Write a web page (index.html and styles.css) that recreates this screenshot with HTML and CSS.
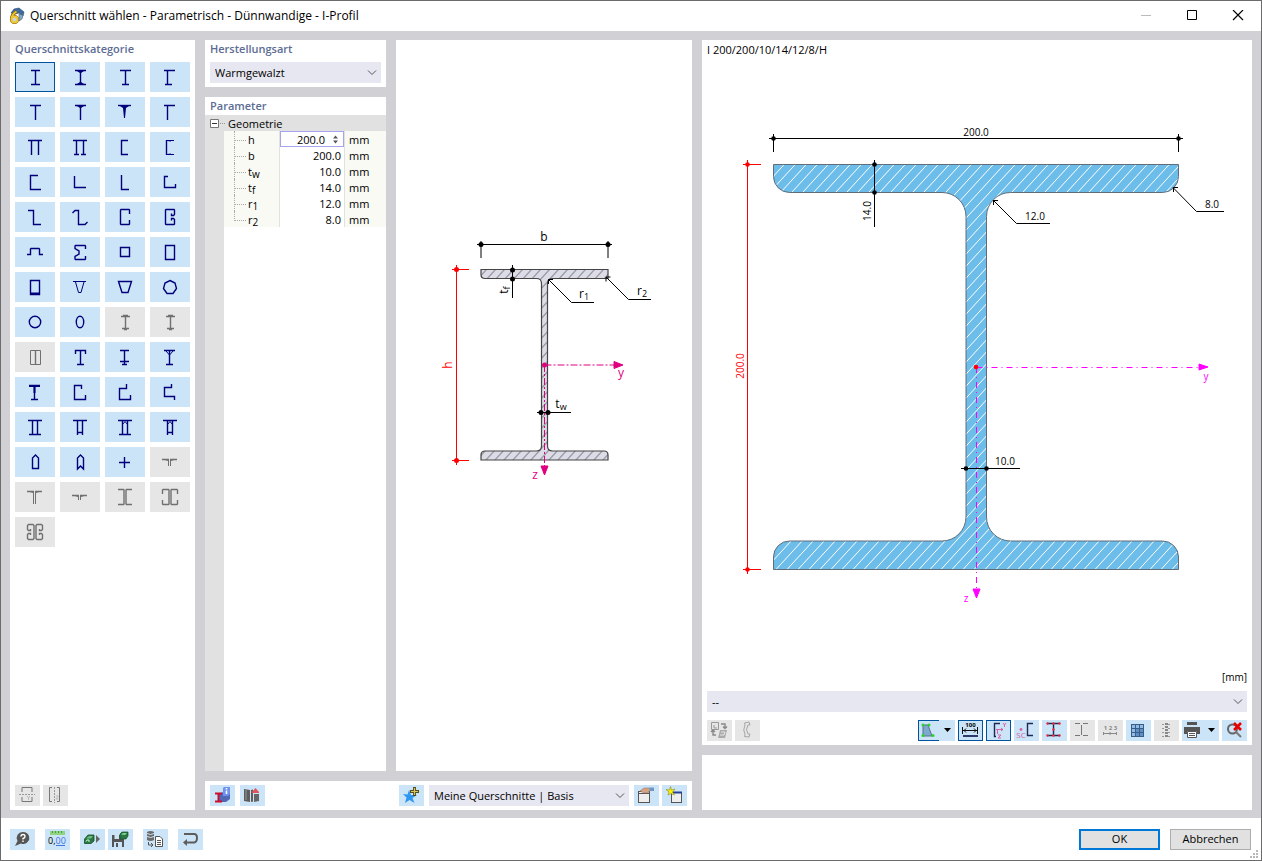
FILE: index.html
```html
<!DOCTYPE html>
<html lang="de">
<head>
    <meta charset="UTF-8">
    <meta name="viewport" content="width=device-width, initial-scale=1.0">
    <title>Querschnitt wählen</title>
    <link rel="stylesheet" href="styles.css">
</head>
<body>
    <header class="titlebar">
        <svg class="app-icon" width="18" height="18" viewBox="0 0 18 18">
            <path d="M3 6L6 2L11 1L16 5L15 9L11 6L7 7Z" fill="#3d6b9c" stroke="#26476e" stroke-width=".6"/>
            <path d="M11 7L15 8L14 12L11 14Z" fill="#86a9cb" stroke="#3c5877" stroke-width=".6"/>
            <path d="M8.500 4.500Q4 7 3.500 12" fill="none" stroke="#7c6110" stroke-width="3.200"/>
            <circle cx="6.500" cy="12.500" r="3" fill="#fff" stroke="#7c6110" stroke-width="3.200"/>
            <path d="M8.500 4.500Q4 7 3.500 12" fill="none" stroke="#f3c62c" stroke-width="2"/>
            <circle cx="6.500" cy="12.500" r="3" fill="#c7d4e2" stroke="#f3c62c" stroke-width="2"/>
        </svg>
        <h1>Querschnitt wählen - Parametrisch - Dünnwandige - I-Profil</h1>
        <div class="window-controls">
            <button aria-label="Minimieren" disabled><svg width="12" height="12" viewBox="0 0 12 12"><path d="M1 5.500H11" stroke="#bbb"/></svg></button>
            <button aria-label="Maximieren"><svg width="12" height="12" viewBox="0 0 12 12"><path d="M1.500 .5H10.500V9.500H1.500Z" fill="none" stroke="#000"/></svg></button>
            <button aria-label="Schließen"><svg width="12" height="12" viewBox="0 0 12 12"><path d="M1 0L11 10M11 0L1 10" stroke="#000" stroke-width="1.200"/></svg></button>
        </div>
    </header>

    <main class="workspace">
        <section class="panel categories">
            <h2>Querschnittskategorie</h2>
            <div class="category-grid">
                <button class="active" aria-label="I-Profil"><svg viewBox="0 0 40 30"><path d="M16 8.500H25M20.500 8.500V22.500M16 22.500H25"/></svg></button>
                <button aria-label="I-Profil geneigt"><svg viewBox="0 0 40 30"><path d="M15 8.500H26M20.500 8.500V22.500M15 22.500H26"/><path class="solid" d="M17 9H24L21 11H20ZM17 22H24L21 20H20Z"/></svg></button>
                <button aria-label="I-Profil einfachsymmetrisch"><svg viewBox="0 0 40 30"><path d="M15 8.500H26M20.500 8.500V22.500M17 22.500H24"/></svg></button>
                <button aria-label="I-Profil unsymmetrisch"><svg viewBox="0 0 40 30"><path d="M14 8.500H25M17.500 8.500V22.500M15 22.500H22"/></svg></button>

                <button aria-label="T-Profil"><svg viewBox="0 0 40 30"><path d="M15 8.500H26M20.500 8.500V23"/></svg></button>
                <button aria-label="T-Profil geneigter Flansch"><svg viewBox="0 0 40 30"><path d="M15 8.500H26M20.500 8.500V23"/><path class="solid" d="M17 9H24L21 11H20Z"/></svg></button>
                <button aria-label="T-Profil geneigter Steg"><svg viewBox="0 0 40 30"><path d="M13 8.500H26"/><path class="solid" d="M15 9H24L21 11L20 21H19L18 11Z"/></svg></button>
                <button aria-label="T-Profil unsymmetrisch"><svg viewBox="0 0 40 30"><path d="M14 8.500H25M17.500 8.500V23"/></svg></button>

                <button aria-label="Doppel-T offen"><svg viewBox="0 0 40 30"><path d="M13 8.500H27M16.500 8.500V23M23.500 8.500V23"/></svg></button>
                <button aria-label="Doppelsteg"><svg viewBox="0 0 40 30"><path d="M13 8.500H27M16.500 8.500V22.500M23.500 8.500V22.500M14 22.500H19M21 22.500H26"/></svg></button>
                <button aria-label="U-Profil"><svg viewBox="0 0 40 30"><path d="M23 8.500H16.500V22.500H23"/></svg></button>
                <button aria-label="U-Profil geneigt"><svg viewBox="0 0 40 30"><path d="M16.500 8V23"/><path class="thin" d="M24 8.500H17L21 9M24 22.500H17L21 22"/></svg></button>

                <button aria-label="U-Profil unsymmetrisch"><svg viewBox="0 0 40 30"><path d="M23 8.500H15.500V22.500H26"/></svg></button>
                <button aria-label="Winkel gleichschenklig"><svg viewBox="0 0 40 30"><path d="M14.500 9V20.500H26"/></svg></button>
                <button aria-label="Winkel ungleichschenklig"><svg viewBox="0 0 40 30"><path d="M16.500 8V22.500H24"/></svg></button>
                <button aria-label="Winkel mit Lippen"><svg viewBox="0 0 40 30"><path d="M18 9.500H14.500V20.500H25.500V17"/></svg></button>

                <button aria-label="Z-Profil"><svg viewBox="0 0 40 30"><path d="M13 8.500H18.500V22.500H26"/></svg></button>
                <button aria-label="Z-Profil mit Lippen"><svg viewBox="0 0 40 30"><path d="M12.500 11L15 8.500H18.500V22.500H25L27.500 20"/></svg></button>
                <button aria-label="C-Profil"><svg viewBox="0 0 40 30"><path d="M24.500 12V8L24 7.500H16L15.500 8V22L16 22.500H24L24.500 22V18"/></svg></button>
                <button aria-label="C-Profil mit Doppellippe"><svg viewBox="0 0 40 30"><path d="M21.500 11.500V13.500H23.500L24.500 12.500V8L24 7.500H16L15.500 8V22L16 22.500H24L24.500 22V17.500L23.500 16.500H21.500V18.500"/></svg></button>

                <button aria-label="Hutprofil"><svg viewBox="0 0 40 30"><path d="M12 17.500H15.500V12L16 11.500H24L24.500 12V17.500H28"/></svg></button>
                <button aria-label="Sigma-Profil"><svg viewBox="0 0 40 30"><path d="M25.500 12V9L25 8.500H15.500L15 9V11.500L19 14V17L15 19.500V22L15.500 22.500H25L25.500 22V19"/></svg></button>
                <button aria-label="Quadratrohr"><svg viewBox="0 0 40 30"><path d="M15.500 10.500H24.500V19.500H15.500Z"/></svg></button>
                <button aria-label="Rechteckrohr"><svg viewBox="0 0 40 30"><path d="M15.500 8.500H24.500V22.500H15.500Z"/></svg></button>

                <button aria-label="Rechteckrohr ungleich"><svg viewBox="0 0 40 30"><path d="M15.500 8.500H24.500V22.500H15.500Z"/><path class="solid" d="M15 20.500H24V9H25V23H15Z"/></svg></button>
                <button aria-label="Trapez mit Flansch"><svg viewBox="0 0 40 30"><path class="thin" d="M13 9.500H26M15.500 10L18.500 20.500H21L24 10"/></svg></button>
                <button aria-label="Trapezrohr"><svg viewBox="0 0 40 30"><path d="M13.500 9.500H26.500L23 20.500H17Z"/></svg></button>
                <button aria-label="Polygonrohr"><svg viewBox="0 0 40 30"><path d="M20 8.500L25 11L26.500 16.500L23 21.500H17L13.500 16.500L15 11Z"/></svg></button>

                <button aria-label="Rundrohr"><svg viewBox="0 0 40 30"><circle cx="20" cy="15" r="5.700"/></svg></button>
                <button aria-label="Ellipsenrohr"><svg viewBox="0 0 40 30"><ellipse cx="20" cy="15" rx="3.700" ry="5.700"/></svg></button>
                <button disabled aria-label="I-Profil verstärkt"><svg viewBox="0 0 40 30"><path d="M16 9.500H25M18 8.500H23M20.500 9V22M17 21.500H24M19 22.500H22"/></svg></button>
                <button disabled aria-label="I-Profil doppelt verstärkt"><svg viewBox="0 0 40 30"><path d="M16 9.500H25M18 8.500H23M20.500 9V22M17 21.500H24M19 22.500H22"/></svg></button>

                <button disabled aria-label="I-Profil mit Blechen"><svg viewBox="0 0 40 30"><path class="thin" d="M15.500 8.500H25.500V22.500H15.500Z"/><path d="M20.500 8V23"/></svg></button>
                <button aria-label="I-Profil mit Flanschlippen"><svg viewBox="0 0 40 30"><path d="M15.500 12V8.500H25.500V12M20.500 8.500V22.500M17 22.500H24"/></svg></button>
                <button aria-label="I-Profil mit Zusatzflansch"><svg viewBox="0 0 40 30"><path d="M15 8.500H24M19.500 8.500V22.500M15 19.500H24M17 22.500H22"/></svg></button>
                <button aria-label="I-Profil mit Dreieck"><svg viewBox="0 0 40 30"><path d="M14 8.500H25M19.500 8.500V22.500M16 22.500H23"/><path class="thin" d="M16 9L19.500 13L23 9"/></svg></button>

                <button aria-label="Schienenprofil"><svg viewBox="0 0 40 30"><path d="M14 8.500H25M19.500 8.500V22.500M16 22.500H23"/><path class="solid" d="M14 8H25V10H20.500V16H18.500V10H14Z"/></svg></button>
                <button aria-label="C unsymmetrisch"><svg viewBox="0 0 40 30"><path d="M21.500 12V8.500H14.500V22.500H25.500V18"/></svg></button>
                <button aria-label="C Lippe außen"><svg viewBox="0 0 40 30"><path d="M21.500 7V11.500H14.500V22.500H25.500V18"/></svg></button>
                <button aria-label="C Lippen gegensinnig"><svg viewBox="0 0 40 30"><path d="M21.500 7V10.500H14.500V19.500H24.500V23"/></svg></button>

                <button aria-label="Kasten mit Flanschen"><svg viewBox="0 0 40 30"><path d="M13 8.500H27M17.500 8.500V22.500M22.500 8.500V22.500M14 22.500H26"/></svg></button>
                <button aria-label="Kasten mit Boden"><svg viewBox="0 0 40 30"><path d="M13 8.500H27M17.500 8.500V23M22.500 8.500V23M17.500 20.500H22.500"/></svg></button>
                <button aria-label="Kasten mit Flanschen und Steife"><svg viewBox="0 0 40 30"><path d="M13 8.500H27M17.500 8.500V22.500M22.500 8.500V22.500M14 22.500H26"/><path class="thin" d="M17.500 12.500L20 9.500L22.500 12.500"/></svg></button>
                <button aria-label="Kasten mit Boden und Steife"><svg viewBox="0 0 40 30"><path d="M13 8.500H27M17.500 8.500V23M22.500 8.500V23M17.500 20.500H22.500"/><path class="thin" d="M17.500 12.500L20 9.500L22.500 12.500"/></svg></button>

                <button aria-label="Kasten mit Spitze"><svg viewBox="0 0 40 30"><path d="M17.500 21.500V11L20.500 8L23.500 11V21.500Z"/></svg></button>
                <button aria-label="Kasten mit Spitze und Kerbe"><svg viewBox="0 0 40 30"><path d="M17.500 22V11L20.500 8L23.500 11V22L20.500 19Z"/></svg></button>
                <button aria-label="Kreuz"><svg viewBox="0 0 40 30"><path d="M14 15.500H25M19.500 10V21"/></svg></button>
                <button disabled aria-label="Doppelwinkel"><svg viewBox="0 0 40 30"><path d="M12 12.500H19M20 12.500H27"/><path class="solid" d="M15 13H19V19H18V14ZM24 13H20V19H21V14Z"/></svg></button>

                <button disabled aria-label="Doppelwinkel lang"><svg viewBox="0 0 40 30"><path d="M12 9.500H19M20 9.500H27"/><path class="solid" d="M15 10H19V22H18V11ZM24 10H20V22H21V11Z"/></svg></button>
                <button disabled aria-label="Doppelwinkel flach"><svg viewBox="0 0 40 30"><path d="M12 13.500H19M20 13.500H27"/><path class="solid" d="M15 14H19V18H18V15ZM24 14H20V18H21V15Z"/></svg></button>
                <button disabled aria-label="Doppel-U"><svg viewBox="0 0 40 30"><path d="M13 7.500H18.500L19 8V22L18.500 22.500H13M27 7.500H21.500L21 8V22L21.500 22.500H27"/></svg></button>
                <button disabled aria-label="Doppel-C"><svg viewBox="0 0 40 30"><path d="M12.500 12V8L13 7.500H18.500L19 8V22L18.500 22.500H13L12.500 22V18M27.500 12V8L27 7.500H21.500L21 8V22L21.500 22.500H27L27.500 22V18"/></svg></button>

                <button disabled aria-label="Doppel-C mit Doppellippe"><svg viewBox="0 0 40 30"><path d="M15.500 12V13.500H13.500L12.500 12.500V8.500L13.500 7.500H18L19 8.500V21.500L18 22.500H13.500L12.500 21.500V17.500L13.500 16.500H15.500V18M24.500 12V13.500H26.500L27.500 12.500V8.500L26.500 7.500H22L21 8.500V21.500L22 22.500H26.500L27.500 21.500V17.500L26.500 16.500H24.500V18"/></svg></button>
            </div>
            <div class="toolbar panel-end">
                <button class="tool" disabled aria-label="An y-Achse spiegeln"><svg viewBox="0 0 25 21"><path d="M7 7V2.500H17V7M7 12V16.500H17V12" fill="none" stroke="#777"/><path d="M4 9.500H20" stroke="#999" stroke-dasharray="2 1"/><path d="M12 11L13.500 13L15 11M13.500 13V15" fill="none" stroke="#bbb"/></svg></button>
                <button class="tool" disabled aria-label="An z-Achse spiegeln"><svg viewBox="0 0 25 21"><path d="M9 2.500H6.500V16.500H9M14 2.500H16.500V16.500H14" fill="none" stroke="#777"/><path d="M11.500 2V18" stroke="#999" stroke-dasharray="2 1"/><path d="M13 11H15.500L13 14H15.500" fill="none" stroke="#bbb"/></svg></button>
            </div>
        </section>

        <div class="center">
            <div class="side">
                <section class="panel production">
                    <h2><label for="production">Herstellungsart</label></h2>
                    <select id="production"><option>Warmgewalzt</option></select>
                </section>
                <section class="panel parameters">
                    <h2>Parameter</h2>
                    <div class="tree-head">
                        <button class="toggle" aria-label="Geometrie zuklappen"><svg width="9" height="9" viewBox="0 0 9 9"><path d="M.5.5H8.500V8.500H.5Z" fill="#fff" stroke="#777"/><path d="M2 4.500H7" stroke="#333"/></svg></button>
                        <span>Geometrie</span>
                    </div>
                    <div class="tree-body">
                        <table>
                            <tr><th><label for="h">h</label></th><td class="edit"><input id="h" type="text" value="200.0"><svg width="5" height="9" viewBox="0 0 5 9"><path d="M0 3.500L2.500 0.500L5 3.500ZM0 5.500L2.500 8.500L5 5.500Z" fill="#555"/></svg></td><td class="unit">mm</td></tr>
                            <tr><th>b</th><td>200.0</td><td class="unit">mm</td></tr>
                            <tr><th>t<sub>w</sub></th><td>10.0</td><td class="unit">mm</td></tr>
                            <tr><th>t<sub>f</sub></th><td>14.0</td><td class="unit">mm</td></tr>
                            <tr><th>r<sub>1</sub></th><td>12.0</td><td class="unit">mm</td></tr>
                            <tr><th>r<sub>2</sub></th><td>8.0</td><td class="unit">mm</td></tr>
                        </table>
                    </div>
                </section>
            </div>

            <section class="panel sketch">
                <svg viewBox="396 40 296 731">
                    <defs>
                        <pattern id="hatch-grey" width="9" height="10" patternUnits="userSpaceOnUse">
                            <rect width="9" height="10" fill="#dcdce6"/>
                            <path d="M0 10L9 0M-1 1.100L1 -1.100M8 11.100L10 8.900" stroke="#9a9aa8" stroke-width="1.300"/>
                        </pattern>
                    </defs>
                    <path d="M481 269.500H608V278.500H552.500Q547.500 278.500 547.500 283.500V446Q547.500 451 552.500 451H604Q608 451 608 455V460H481V455Q481 451 485 451H536.500Q541.500 451 541.500 446V283.500Q541.500 278.500 536.500 278.500H485Q481 278.500 481 274.500Z" fill="url(#hatch-grey)" stroke="#444" stroke-width="1.200"/>
                    <g class="dim">
                        <path d="M477 244.500H612M481 241V258M608 241V258M512.500 265V298M537 412.500H571M548.500 279.500L571.500 302.500H594M606 277L628.500 299.500H651M548.500 284V279.500H553M606 281.500V277H610.500"/>
                        <circle cx="481" cy="244.500" r="2.500"/><circle cx="608" cy="244.500" r="2.500"/>
                        <circle cx="512.500" cy="270" r="2.500"/><circle cx="512.500" cy="279" r="2.500"/>
                        <circle cx="541" cy="412.500" r="2.500"/><circle cx="548" cy="412.500" r="2.500"/>
                        <text x="544" y="241">b</text>
                        <text x="584" y="298">r<tspan class="sub" dy="2">1</tspan></text>
                        <text x="642" y="295">r<tspan class="sub" dy="2">2</tspan></text>
                        <text x="561" y="408">t<tspan class="sub" dy="2">w</tspan></text>
                        <text transform="translate(508 290) rotate(-90)">t<tspan class="sub" dy="2">f</tspan></text>
                    </g>
                    <g class="dim red">
                        <path d="M456.500 265V465M452 269.500H469M452 460.500H469"/>
                        <circle cx="456.500" cy="269.500" r="2.500"/><circle cx="456.500" cy="460.500" r="2.500"/>
                        <text transform="translate(452 365) rotate(-90)">h</text>
                    </g>
                    <g class="dim pink">
                        <path d="M544.500 365H615M544.500 365V467" stroke-dasharray="7 2 2 2"/>
                        <path class="tip" d="M614 361.500L623 365L614 368.500ZM541 466L544.500 475L548 466Z"/>
                        <circle cx="544.500" cy="365" r="2.500"/>
                        <text x="621" y="377">y</text>
                        <text x="535" y="479">z</text>
                    </g>
                </svg>
            </section>

            <div class="panel favourites">
                <button class="tool" aria-label="Querschnittsinfo"><svg viewBox="0 0 25 21"><path d="M9 9L13 7H20V14L16 17H9Z" fill="#5169b5"/><path d="M13 3L14 2H20V9L18 11H13Z" fill="#6f92ee"/><path d="M16.500 3V4.500M16.500 5.500V9" stroke="#fff" stroke-width="1.600"/><path d="M5 8.500H12M8.500 8.500V16M5 16.500H12" stroke="#c8102e" stroke-width="2"/></svg></button>
                <button class="tool" aria-label="Bibliothek"><svg viewBox="0 0 25 21"><path d="M4 4L10 5V17L4 16ZM11 5L13 4.500V16.500L11 17Z" fill="#5d5d5d"/><path d="M6 5V15" stroke="#999"/><path d="M14 9H19V16L14 17Z" fill="#666"/><path d="M12 7L15.500 3L19 7V8H12Z" fill="#e0555c"/></svg></button>
                <button class="tool star" aria-label="Zu Favoriten hinzufügen"><svg viewBox="0 0 25 21"><path d="M10 5L12 10L18 10L13.500 13L15.500 18L10.500 15L6 18L7.500 12.500L4 9L8.500 9.500Z" fill="#3097f0"/><path d="M15.500 2V11M11 6.500H20" stroke="#544c1d" stroke-width="3"/><path d="M15.500 3V10M12 6.500H19" stroke="#d9c65a" stroke-width="1.200"/></svg></button>
                <select aria-label="Favoritengruppe"><option>Meine Querschnitte | Basis</option></select>
                <div class="toolbar">
                    <button class="tool" aria-label="Gruppe bearbeiten"><svg viewBox="0 0 25 21"><rect x="4.500" y="6.500" width="11" height="11" fill="#eee" stroke="#555"/><path d="M5 8.500H15" stroke="#555"/><path d="M6 6L10 3H15L16 5L14 8H10L8 7Z" fill="#d4a284" stroke="#8f6e5b" stroke-width=".5"/><path d="M15 2.500H20V6L16 6Z" fill="#7196c2"/></svg></button>
                    <button class="tool" aria-label="Neue Gruppe"><svg viewBox="0 0 25 21"><rect x="9.500" y="7.500" width="10" height="10" fill="#eee" stroke="#555"/><path d="M9 7.500H20" stroke="#243f94" stroke-width="2"/><path d="M8.500 1.500L9.500 5L13 4L10.500 7L12.500 10L9 8.500L6 10L7 7L4 4.500L7.500 5Z" fill="#fff200" stroke="#8b8c24" stroke-width=".6"/></svg></button>
                </div>
            </div>
        </div>

        <div class="right">
            <section class="panel preview">
                <p class="section-name">I 200/200/10/14/12/8/H</p>
                <svg class="section-drawing" viewBox="707 62 540 604">
                    <defs>
                        <pattern id="hatch-blue" width="11" height="12" patternUnits="userSpaceOnUse">
                            <rect width="11" height="12" fill="#6dbdeb"/>
                            <path d="M0 12L11 0M-1 1.090L1 -1.090M10 13.090L12 10.910" stroke="#fff"/>
                        </pattern>
                    </defs>
                    <path d="M773.500 164.500H1178.500V176.500A16 16 0 0 1 1162.500 192.500H1010.500A24 24 0 0 0 986.500 216.500V517A24 24 0 0 0 1010.500 541H1162.500A16 16 0 0 1 1178.500 557V569.500H773.500V557A16 16 0 0 1 789.500 541H942A24 24 0 0 0 966 517V216.500A24 24 0 0 0 942 192.500H789.500A16 16 0 0 1 773.500 176.500Z" fill="url(#hatch-blue)" stroke="#606d78"/>
                    <g class="dim small">
                        <path d="M769 138.500H1183M773.500 134V152M1178.500 134V152M874.500 160V227M961 468.500H1020M993 200L1016.500 223.500H1050M1173 187.500L1196.500 211.500H1224M993.500 205V200.500H998M1173.500 192V187.500H1178"/>
                        <circle cx="773.500" cy="138.500" r="2.300"/><circle cx="1178.500" cy="138.500" r="2.300"/>
                        <circle cx="874.500" cy="164.500" r="2.300"/><circle cx="874.500" cy="192.500" r="2.300"/>
                        <circle cx="966" cy="468.500" r="2.300"/><circle cx="986.500" cy="468.500" r="2.300"/>
                        <text x="976" y="136">200.0</text>
                        <text x="1035" y="220">12.0</text>
                        <text x="1212" y="208">8.0</text>
                        <text x="1005" y="465">10.0</text>
                        <text transform="translate(871 211) rotate(-90)">14.0</text>
                    </g>
                    <g class="dim small red">
                        <path d="M747.500 160V574M743 164.500H761M743 569.500H761"/>
                        <circle cx="747.500" cy="164.500" r="2.300"/><circle cx="747.500" cy="569.500" r="2.300"/>
                        <text transform="translate(744 366) rotate(-90)">200.0</text>
                    </g>
                    <g class="dim small magenta">
                        <path d="M976.500 367.500H1200M976.500 367V590" stroke-dasharray="6 4 1 4"/>
                        <path class="tip" d="M1199 364L1208 367L1199 370ZM973 589L976.500 598L980 589Z"/>
                        <text x="1206" y="380">y</text>
                        <text x="966" y="602">z</text>
                    </g>
                    <circle cx="976" cy="367" r="2.300" fill="#f00"/>
                </svg>
                <p class="unit-note">[mm]</p>
                <select aria-label="Darstellung"><option>--</option></select>
                <div class="toolbar view-tools">
                    <button class="tool" disabled aria-label="Drehen"><svg viewBox="0 0 25 21"><path d="M4.500 2.500H11.500V9.500H4.500ZM7 5V8H10" fill="none" stroke="#999"/><path d="M14 4H18V8M16 6.500L18 8.500L20 6.500M4 12L6 10L8 12M6 11V15H9" fill="none" stroke="#888" stroke-width="1.400"/><path d="M13 10H20L18 18H11Z" fill="#aaa"/><path d="M14 12H18L17 15H13" fill="none" stroke="#e6e6e6"/></svg></button>
                    <button class="tool" disabled aria-label="Verformung"><svg viewBox="0 0 25 21"><path d="M9.500 3L14 2L15 5H13Q10 10 13 14H15L14 17L9.500 16.500M9.500 3L10 5Q7.500 10 10 14.500L9.500 16.500" fill="none" stroke="#a5a5a5"/></svg></button>
                    <button class="tool split half-on first-right" aria-label="Ansicht"><svg viewBox="0 0 37 21"><path d="M5 5L10 5L14 16H5Z" fill="#7ea9ce" stroke="#55708e"/><circle cx="5" cy="5" r="1.500" fill="#2ed22e"/><circle cx="11" cy="5" r="1.500" fill="#2ed22e"/><circle cx="15" cy="15.500" r="1.500" fill="#2ed22e"/><circle cx="5" cy="15.500" r="1.500" fill="#2ed22e"/><path d="M26 8H33L29.500 12Z"/></svg></button>
                    <button class="tool on" aria-label="Bemaßung"><svg viewBox="0 0 25 21"><text x="12.500" y="7" class="icon-text">100</text><path d="M4.500 7V14M19.500 7V14M5 10.500H20M8 8.500L6 10.500L8 12.500M16 8.500L18 10.500L16 12.500" fill="none" stroke="#111"/><path d="M5 16H20" stroke="#2b3a69" stroke-width="2"/></svg></button>
                    <button class="tool on" aria-label="Hauptachsen"><svg viewBox="0 0 25 21"><path d="M14 3.500H8.500V16.500H10" fill="none" stroke="#1d2a55" stroke-width="1.400"/><path d="M10 9.500H17L15 8M15 11L17 9.500M11.500 9V14M17 3L18.500 5L20 3M18.500 5V7M12 15H15L12 18H15" fill="none" stroke="#d765a5"/></svg></button>
                    <button class="tool" aria-label="Schubmittelpunkt"><svg viewBox="0 0 25 21"><path d="M19 3.500H13.500V15.500H19" fill="none" stroke="#1d2a55" stroke-width="1.400"/><circle cx="7" cy="9.500" r="1.400" fill="#d765a5"/><text x="7" y="18" class="icon-text pink-text">SC</text></svg></button>
                    <button class="tool" aria-label="Linien"><svg viewBox="0 0 25 21"><path d="M5 3.500H18M5 15.500H18M11.500 3.500V15.500" stroke="#1d2a55" stroke-width="1.400"/><g fill="#f0283c"><circle cx="5.500" cy="3.500" r="1.200"/><circle cx="11.500" cy="3.500" r="1.200"/><circle cx="17.500" cy="3.500" r="1.200"/><circle cx="11.500" cy="9.500" r="1.200"/><circle cx="5.500" cy="15.500" r="1.200"/><circle cx="11.500" cy="15.500" r="1.200"/><circle cx="17.500" cy="15.500" r="1.200"/></g></svg></button>
                    <button class="tool" disabled aria-label="Elemente"><svg viewBox="0 0 25 21"><path d="M5 3.500H10M13 3.500H18M5 15.500H10M13 15.500H18M11.500 5V15" stroke="#777"/></svg></button>
                    <button class="tool" disabled aria-label="Nummerierung"><svg viewBox="0 0 25 21"><text x="12.500" y="10" class="icon-text grey-text">1 2 3</text><path d="M5 13.500H19M5.500 12V15M12 12V15M18.500 12V15" stroke="#888"/></svg></button>
                    <button class="tool" aria-label="Raster"><svg viewBox="0 0 25 21"><path d="M5 4H18V17H5Z" fill="#8fbbe6"/><path d="M9 8H18V17H9Z" fill="#5f8fc4"/><path d="M5.500 4V17M9.500 4V17M13.500 4V17M17.500 4V17M5 4.500H18M5 8.500H18M5 12.500H18M5 16.500H18" stroke="#385d86"/></svg></button>
                    <button class="tool" disabled aria-label="Spannungspunkte"><svg viewBox="0 0 25 21"><path d="M12.500 3V18" stroke="#888" stroke-width="3" stroke-dasharray="2 1"/><path d="M8 4.500H11M8 8.500H11M8 12.500H11M8 16.500H11M14 4.500H17M14 8.500H17M14 12.500H17M14 16.500H17" stroke="#999" stroke-dasharray="2 1"/></svg></button>
                    <button class="tool split" aria-label="Drucken"><svg viewBox="0 0 37 21"><path d="M5 2H15V5H5ZM2 7H18V14H15V11H5V14H2Z" fill="#555"/><path d="M5.500 11.500H14.500V17.500H5.500Z" fill="#fff" stroke="#555"/><path d="M7 13.500H13M7 15.500H13" stroke="#555"/><path d="M26 8H33L29.500 12Z"/></svg></button>
                    <button class="tool" aria-label="Zoom zurücksetzen"><svg viewBox="0 0 25 21"><circle cx="10.500" cy="9" r="4.500" fill="none" stroke="#666" stroke-width="2"/><path d="M14 12L19 17" stroke="#777" stroke-width="2"/><path d="M12 3L19 10M19 3L12 10" stroke="#e80000" stroke-width="2.600"/></svg></button>
                </div>
            </section>
            <section class="panel messages"></section>
        </div>
    </main>

    <footer class="footer">
        <button class="tool" aria-label="Hilfe"><svg viewBox="0 0 25 21"><path d="M13 3A6 6 0 1 1 11 14.500L5 17L7.500 12A6 6 0 0 1 13 3Z" fill="#555"/><path d="M11 7.500Q11 5.500 13 5.500T15 7.500Q15 9 13 9.500V10.500M13 11.500V13" fill="none" stroke="#fff" stroke-width="1.400"/></svg></button>
        <button class="tool" aria-label="Einheiten und Dezimalstellen"><svg viewBox="0 0 25 21"><path d="M5 2H20V6H5Z" fill="#8fd481"/><path d="M7.500 2V4M10.500 2V4M13.500 2V4M16.500 2V4" stroke="#4f9b46"/><text x="12" y="15" class="unit-text">0,<tspan>00</tspan></text><path d="M11 16.500H20" stroke="#3f76df"/></svg></button>
        <div class="toolbar">
            <button class="tool" aria-label="Laden"><svg viewBox="0 0 25 21"><path d="M4.500 10L8 6H14V12L11 14.500H4.500Z" fill="#287a42" stroke="#184f29" stroke-width=".8"/><path d="M6 9.500L9 7H13L11 9.500Z" fill="#71b983"/><path d="M6 12.500L7 11H9V13" fill="none" stroke="#d8eedc"/><path d="M16 6L20 10L16 14Z" fill="#666"/></svg></button>
            <button class="tool" aria-label="Speichern"><svg viewBox="0 0 25 21"><path d="M4 6H14L16 8V18H4Z" fill="#555"/><path d="M6.500 6H11V10H6.500ZM6 13H14V18H6Z" fill="#cce4f7"/><path d="M8 14H10V18H8Z" fill="#555"/><path d="M12 5L14 3H20V7L18 10H12Z" fill="#287a42" stroke="#184f29" stroke-width=".7"/><path d="M13 5.500L15 4H19L17 6Z" fill="#8acc98"/></svg></button>
        </div>
        <button class="tool" aria-label="Aus Datenbank kopieren"><svg viewBox="0 0 25 21"><path d="M4 3Q7.500 1 11 3V11Q7.500 13 4 11Z" fill="#6a6a6a"/><path d="M4 4.500Q7.500 6.500 11 4.500M4 7.500Q7.500 9.500 11 7.500" fill="none" stroke="#cce4f7"/><path d="M5.500 13V16H10M8 14L10 16L8 18" fill="none" stroke="#555"/><path d="M12.500 7.500H17L19.500 10V17.500H12.500Z" fill="#fff" stroke="#555"/><path d="M14 11.500H18M14 13.500H18M14 15.500H18" stroke="#555"/></svg></button>
        <button class="tool" aria-label="Zurück"><svg viewBox="0 0 25 21"><path d="M6 5H16Q19 5 19 9T16 13.500H7" fill="none" stroke="#5d5d5d" stroke-width="2"/><path d="M5 13.500L9 10V17Z" fill="#5d5d5d"/></svg></button>
        <div class="dialog-buttons">
            <button class="ok">OK</button>
            <button>Abbrechen</button>
        </div>
        <svg class="grip" width="9" height="9" viewBox="0 0 9 9"><path d="M6 0H8V2H6ZM3 3H5V5H3ZM6 3H8V5H6ZM0 6H2V8H0ZM3 6H5V8H3ZM6 6H8V8H6Z" fill="#b8b8b8"/></svg>
    </footer>
</body>
</html>
```
FILE: styles.css
```css
* {
    box-sizing: border-box;
}

body {
    margin: 0;
    min-height: 100vh;
    display: flex;
    flex-direction: column;
    border: 1px solid #6b6b6b;
    background-color: #fff;
    color: #000;
    font-family: "Open Sans", "Noto Sans", sans-serif;
    font-size: 11px;
    line-height: 16px;
}

h1, h2, p {
    margin: 0;
    font-weight: normal;
}

button, select, input {
    font: inherit;
    color: inherit;
    border: none;
    border-radius: 0;
    padding: 0;
    margin: 0;
}

svg {
    display: block;
}

/* Title bar */
.titlebar {
    display: flex;
    align-items: center;
    height: 30px;
    padding-left: 7px;
}

.titlebar h1 {
    margin-left: 4px;
    font-size: 12px;
}

.window-controls {
    display: flex;
    margin-left: auto;
}

.window-controls button {
    width: 46px;
    height: 30px;
    display: flex;
    align-items: center;
    justify-content: center;
    background: none;
}

/* Workspace */
.workspace {
    flex: 1;
    display: grid;
    grid-template-columns: 185px minmax(0, 487fr) minmax(0, 550fr);
    gap: 10px;
    padding: 9px 9px 8px;
    background-color: #d1d0d5;
}

.panel {
    background-color: #fff;
}

.panel h2 {
    color: #5c6c94;
    font-size: 11px;
    font-weight: 600;
    line-height: 18px;
}

.categories {
    display: flex;
    flex-direction: column;
    padding: 0 5px 4px;
}

.category-grid {
    display: grid;
    grid-template-columns: repeat(4, 1fr);
    gap: 5px;
    margin-top: 4px;
}

.category-grid button {
    height: 30px;
    background-color: #cce4f7;
    color: #00007d;
}

.category-grid button:disabled {
    background-color: #e6e6e6;
    color: #707070;
}

.category-grid .active {
    box-shadow: inset 0 0 0 1px #00549f;
}

.category-grid svg {
    width: 100%;
    height: 30px;
    fill: none;
    stroke: currentColor;
    stroke-width: 1.4;
}

.category-grid .thin {
    stroke-width: 1;
}

.category-grid .solid {
    fill: currentColor;
    stroke: none;
}

.toolbar {
    display: flex;
    gap: 3px;
}

.panel-end {
    margin-top: auto;
}

.tool {
    width: 25px;
    height: 21px;
    background-color: #cce4f7;
}

.tool svg {
    width: 100%;
    height: 21px;
}

.tool:disabled {
    background-color: #e6e6e6;
}

.tool.split {
    width: 37px;
}

.tool.on {
    box-shadow: inset 0 0 0 1px #00549f;
}

.tool.half-on {
    background-image: linear-gradient(#00549f, #00549f), linear-gradient(#00549f, #00549f), linear-gradient(#00549f, #00549f);
    background-size: 21px 1px, 21px 1px, 1px 21px;
    background-position: left top, left bottom, left top;
    background-repeat: no-repeat;
}

.icon-text {
    font-size: 6px;
    font-weight: 700;
    text-anchor: middle;
}

.pink-text {
    font-size: 8px;
    font-weight: 400;
    fill: #d765a5;
}

.grey-text {
    fill: #888;
}

.unit-text {
    font-size: 9px;
    text-anchor: middle;
}

.unit-text tspan {
    fill: #3f76df;
}

select {
    appearance: none;
    width: 100%;
    height: 21px;
    padding: 0 24px 0 5px;
    background: #e7e7f1 url("data:image/svg+xml,%3Csvg xmlns='http://www.w3.org/2000/svg' width='10' height='6'%3E%3Cpath d='M1 .5L5 4.500L9 .5' fill='none' stroke='%23555'/%3E%3C/svg%3E") no-repeat right 4px center;
}

/* Parameters and sketch */
.center {
    display: grid;
    grid-template-columns: 181px minmax(0, 1fr);
    grid-template-rows: 1fr auto;
    gap: 10px;
}

.side {
    display: flex;
    flex-direction: column;
    gap: 10px;
}

.production {
    height: 47px;
    padding: 0 5px;
}

.production select {
    margin-top: 4px;
}

.parameters {
    flex: 1;
    display: flex;
    flex-direction: column;
}

.parameters h2 {
    padding-left: 5px;
}

.tree-head {
    display: flex;
    align-items: center;
    height: 16px;
    padding-left: 5px;
    background-color: #e1e1e1;
}

.tree-head span {
    padding: 1px 0 0 1px;
}

.toggle {
    display: flex;
    align-items: center;
    width: 17px;
    background: none;
}

.toggle::after {
    content: "";
    width: 5px;
    margin-left: 1px;
    border-top: 1px dotted #999;
}

.tree-body {
    flex: 1;
    border-left: 19px solid #e1e1e1;
}

.tree-body table {
    width: 100%;
    border-spacing: 0;
    table-layout: fixed;
}

.tree-body th,
.tree-body td {
    height: 16px;
    padding: 2px 3px 0 0;
    line-height: 14px;
    text-align: right;
}

.tree-body th {
    position: relative;
    width: 56px;
    padding-left: 24px;
    border-right: 1px solid #e1e1e1;
    background-color: #f9faf4;
    font-weight: normal;
    text-align: left;
}

.tree-body td {
    width: 64px;
}

/* dotted branch lines of the tree */
.tree-body th::before {
    content: "";
    position: absolute;
    left: 10px;
    top: 0;
    width: 11px;
    height: 9px;
    border-left: 1px dotted #aaa;
    border-bottom: 1px dotted #aaa;
}

.tree-body tr:not(:last-child) th::after {
    content: "";
    position: absolute;
    left: 10px;
    top: 9px;
    height: 7px;
    border-left: 1px dotted #aaa;
}

.tree-body .unit {
    width: auto;
    padding: 2px 0 0 4px;
    border-left: 1px solid #e1e1e1;
    background-color: #f9faf4;
    text-align: left;
}

.tree-body .edit {
    position: relative;
    padding: 0;
}

.edit input {
    display: block;
    width: 100%;
    height: 16px;
    padding: 0 18px 0 0;
    border: 1px solid #a6a4ea;
    text-align: right;
    outline: none;
}

.edit svg {
    position: absolute;
    right: 6px;
    top: 4px;
}

sub {
    font-size: 10px;
    line-height: 0;
    vertical-align: -2px;
}

.sketch {
    display: flex;
}

.sketch svg {
    width: 100%;
    height: 100%;
}

.dim {
    fill: #000;
    font-size: 12px;
    text-anchor: middle;
}

.dim path {
    fill: none;
    stroke: #000;
}

.dim .sub {
    font-size: 9px;
}

.small {
    font-size: 10px;
}

.red {
    fill: #f00;
}

.red path {
    stroke: #f00;
}

.pink {
    fill: #df0080;
}

.pink path {
    stroke: #df0080;
}

.pink .tip {
    fill: #df0080;
}

.magenta {
    fill: #f0f;
}

.magenta path {
    stroke: #f0f;
}

.magenta .tip {
    fill: #f0f;
}

.favourites {
    grid-column: 1 / -1;
    display: flex;
    gap: 5px;
    padding: 4px 5px;
}

.favourites select {
    width: 200px;
}

.favourites .star {
    margin-left: auto;
}

/* Preview */
.right {
    display: flex;
    flex-direction: column;
    gap: 10px;
}

.preview {
    flex: 1;
    display: flex;
    flex-direction: column;
    padding: 0 5px 4px;
}

.section-name {
    margin-bottom: 2px;
    line-height: 20px;
}

.section-drawing {
    flex: 1;
    width: 100%;
    min-height: 0;
}

.unit-note {
    margin-bottom: 3px;
    font-size: 10px;
    line-height: 22px;
    text-align: right;
}

.view-tools {
    margin-top: 8px;
}

.first-right {
    margin-left: auto;
}

.messages {
    height: 55px;
}

/* Footer */
.footer {
    position: relative;
    display: flex;
    align-items: center;
    gap: 10px;
    height: 42px;
    padding: 0 10px 0 9px;
}

.dialog-buttons {
    display: flex;
    gap: 10px;
    margin-left: auto;
}

.dialog-buttons button {
    width: 81px;
    height: 21px;
    border: 1px solid #adadad;
    background-color: #e1e1e1;
}

.dialog-buttons .ok {
    border: 2px solid #0078d7;
}

.grip {
    position: absolute;
    right: 2px;
    bottom: 1px;
}
```
